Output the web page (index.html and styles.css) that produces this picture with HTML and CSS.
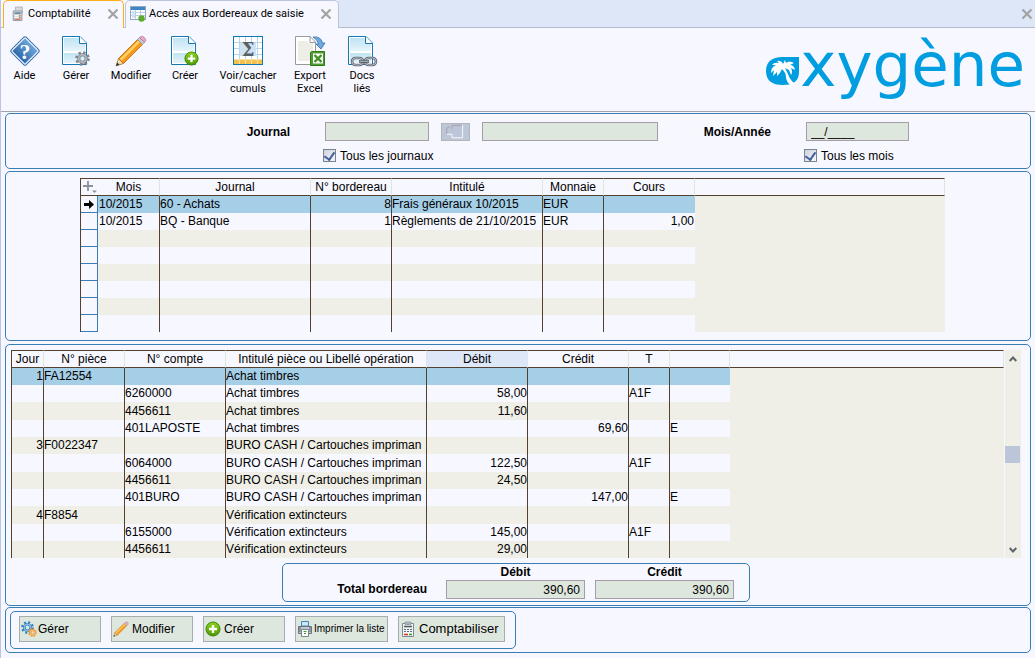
FILE: index.html
```html
<!DOCTYPE html>
<html lang="fr">
<head>
<meta charset="utf-8">
<title>Comptabilité</title>
<link rel="stylesheet" href="styles.css">
</head>
<body>
<svg class="defs" aria-hidden="true">
  <defs>
    <linearGradient id="gBlue" x1="0" y1="0" x2="0" y2="1"><stop offset="0" stop-color="#6fa6da"/><stop offset="1" stop-color="#2e68a8"/></linearGradient>
    <linearGradient id="gPage" x1="0" y1="0" x2="0" y2="1"><stop offset="0" stop-color="#bfe4f2"/><stop offset="1" stop-color="#e6f3fb"/></linearGradient>
    <linearGradient id="gGreen" x1="0" y1="0" x2="0" y2="1"><stop offset="0" stop-color="#8fd21c"/><stop offset="1" stop-color="#4c9a06"/></linearGradient>
    <symbol id="page" viewBox="0 0 32 32">
      <path d="M2.500 1.500H20L26.500 8V29.500H2.500Z" fill="#fff" stroke="#1478b4"/>
      <path d="M4 3H19V9H25V16H4Z" fill="url(#gPage)"/><path d="M4 18H25V28H4Z" fill="url(#gPage)"/>
      <path d="M19.500 1.500V8.500H26.500" fill="#fff" stroke="#1478b4"/>
    </symbol>
    <symbol id="plus" viewBox="0 0 16 16">
      <circle cx="8" cy="8" r="7" fill="url(#gGreen)" stroke="#3c8404"/>
      <path d="M8 4V12M4 8H12" stroke="#fff" stroke-width="2.400"/>
    </symbol>
    <symbol id="pencil" viewBox="0 0 32 32">
      <path d="M1 31L3.500 23.500L8.500 28.500Z" fill="#f6d9a8" stroke="#8a6a3a" stroke-width=".7"/><path d="M1 31L2.200 27.500L4.500 29.800Z" fill="#333"/>
      <path d="M3.500 23.500L22.500 4.500L27.500 9.500L8.500 28.500Z" fill="#f59a1b" stroke="#b8640c" stroke-width=".8"/>
      <path d="M4.800 24L23.300 5.500L25 7.200L6.500 25.700Z" fill="#ffcf6a"/>
      <path d="M22.500 4.500L24.500 2.500L29.500 7.500L27.500 9.500Z" fill="#c3cbd6" stroke="#7f8894" stroke-width=".6"/>
      <path d="M24.500 2.500Q26.500 .5 28.500 1.800L30.200 3.500Q31.500 5.500 29.500 7.500Z" fill="#f0a6c4" stroke="#a8668a" stroke-width=".6"/>
    </symbol>
    <symbol id="gear" viewBox="0 0 16 16">
      <circle cx="8" cy="8" r="6.300" fill="none" stroke="currentColor" stroke-width="3" stroke-dasharray="2.474 2.474"/>
      <circle cx="8" cy="8" r="4" fill="none" stroke="currentColor" stroke-width="3.200"/>
      <circle cx="8" cy="8" r="4" fill="none" stroke="#fff" stroke-opacity=".45" stroke-width="1.600"/>
    </symbol>
    <symbol id="cross" viewBox="0 0 12 12"><path d="M1.500 1.500L10.500 10.500M10.500 1.500L1.500 10.500" stroke="#a3a3a3" stroke-width="2.200"/></symbol>
  </defs>
</svg>

<header class="tabbar">
  <div class="tab tab-active">
    <svg class="tab-icon" viewBox="0 0 16 16"><path d="M5 0H13V7H5Z" fill="#d9d9dc" stroke="#b2b2b6"/><path d="M2.500 4.500H12.500V15.500H2.500Z" fill="#c9d2da" stroke="#8b98a4"/><path d="M4 6H11V8H4Z" fill="#6f8ea8"/><path d="M4 10H11M4 12H11" stroke="#fff" stroke-width="1.200"/><path d="M4 14H11M9 10H11M9 12H11" stroke="#e0622a" stroke-width="1.200"/></svg>
    <a class="tab-name" href="#compta">Comptabilité</a>
    <button class="close" aria-label="Fermer Comptabilité"><svg viewBox="0 0 12 12"><use href="#cross"/></svg></button>
  </div>
  <div class="tab">
    <svg class="tab-icon" viewBox="0 0 16 16"><rect x=".5" y=".5" width="15" height="13" fill="#fff" stroke="#8fa9c4"/><rect x="1" y="1" width="14" height="3" fill="#3f86c4"/><path d="M1 6.500H15M1 9.500H15M5.500 4V13M10.500 4V13" stroke="#b9cfe2"/><path d="M2 5H5V12H2Z" fill="#cfe3f3"/><circle cx="11.500" cy="12.500" r="3.200" fill="#5cab2c"/></svg>
    <a class="tab-name" href="#bordereaux">Accès aux Bordereaux de saisie</a>
    <button class="close" aria-label="Fermer Bordereaux"><svg viewBox="0 0 12 12"><use href="#cross"/></svg></button>
  </div>
  <button class="close close-all" aria-label="Fermer"><svg viewBox="0 0 12 12"><use href="#cross"/></svg></button>
</header>

<nav class="toolbar">
  <button class="tool w47"><svg viewBox="0 0 32 32"><rect x="5" y="5" width="22" height="22" rx="2" transform="rotate(45 16 16)" fill="#2d68a6"/><rect x="6.500" y="6.500" width="19" height="19" rx="1" transform="rotate(45 16 16)" fill="url(#gBlue)" stroke="#e4effa" stroke-width="1.200"/><text x="16" y="24" class="help-mark">?</text></svg>Aide</button>
  <button class="tool w56"><svg viewBox="0 0 32 32"><use href="#page"/><use class="c-grey" href="#gear" x="15" y="16" width="15" height="15"/></svg>Gérer</button>
  <button class="tool w54"><svg viewBox="0 0 32 32"><use href="#pencil"/></svg>Modifier</button>
  <button class="tool w54"><svg viewBox="0 0 32 32"><use href="#page"/><use href="#plus" x="15" y="16" width="15" height="15"/></svg>Créer</button>
  <button class="tool w72"><svg viewBox="0 0 32 32"><rect x="1.500" y="1.500" width="29" height="28" fill="#fff" stroke="#1478b4"/><path d="M7.500 2V25M13.500 2V25M19.500 2V25M25.500 2V25M2 7.500H30M2 13.500H30M2 19.500H30" stroke="#b5d5ea"/><path d="M8 8H24V21H8Z" fill="#cfe2f2"/><path d="M2 24.500H30V29H2Z" fill="#f5c04e"/><path d="M7.500 24V29M13.500 24V29M19.500 24V29M25.500 24V29" stroke="#fbe1a2"/><text x="16" y="21" class="sigma">Σ</text></svg>Voir/cacher<br>cumuls</button>
  <button class="tool w52"><svg viewBox="0 0 32 32"><path d="M1.500 1.500H16L21.500 7V29.500H1.500Z" fill="#fff" stroke="#9a9a9a"/><path d="M4 6H14V8H19V26H4Z" fill="#edefe7"/><path d="M16 1.500V7.500H21.500" fill="none" stroke="#9a9a9a"/><path d="M19 2Q27 1 28.500 8H31L27 14L22 9H24.500Q24 5 19 2Z" fill="#6fa9dc" stroke="#2f6fae" stroke-width=".8"/><path d="M17.500 16.500H30.500V30.500H16.500V17.500Z" fill="#4f9d2f" stroke="#2f7a18"/><rect x="19" y="18.500" width="10" height="10" fill="#fff"/><path d="M20.500 20L27.500 27M27.500 20L20.500 27" stroke="#3f8f22" stroke-width="2.400"/></svg>Export<br>Excel</button>
  <button class="tool w52"><svg viewBox="0 0 32 32"><use href="#page"/><g fill="none" stroke="#5d6670" stroke-width="2.600"><rect x="6" y="23" width="11" height="7" rx="3.500"/><rect x="19" y="23" width="11" height="7" rx="3.500"/></g><g fill="none" stroke="#c3c9cf" stroke-width=".9"><rect x="6" y="23" width="11" height="7" rx="3.500"/><rect x="19" y="23" width="11" height="7" rx="3.500"/></g><path d="M13 26.500H23" stroke="#4d565f" stroke-width="2.600"/><path d="M13.500 26.300H22.500" stroke="#c3c9cf" stroke-width=".9"/></svg>Docs<br>liés</button>
  <div class="logo">
    <svg viewBox="0 0 34 29" role="img" aria-label="Palmier"><path d="M15 0H33V15Q33 28 17 28Q0 28 0 14Q0 1 15 0Z" fill="#009ee0"/>
      <path d="M17 7Q15 3 11 4L13 6Q8 5 6 8L10 8Q5 10 5 16L8 13L7 19L11 15L11 19Q14 17 16 12Q20 16 20 20Q20 25 25 28L28 26Q24 23 22 17L19 11L23 13L25 18Q27 15 25 11L29 13Q28 8 24 8L28 6Q23 3 20 6L19 3Z" fill="#fff"/></svg>
    <span>xygène</span>
  </div>
</nav>

<main class="content">
  <form class="panel filters">
    <label class="name" for="journal">Journal</label>
    <input class="field" id="journal" type="text">
    <button class="lookup" type="button" aria-label="Choisir un journal"><svg viewBox="0 0 29 18"><path d="M10.500 2V5.500M10.500 1.500H22M8 3.500H6L4.500 6V11" fill="none" stroke="#a59aa6"/><path d="M22.500 1V15.500H10.500V11.500H5" fill="none" stroke="#fff"/></svg></button>
    <input class="field" id="journal-nom" type="text" aria-label="Nom du journal">
    <label class="name" for="mois">Mois/Année</label>
    <input class="field" id="mois" type="text" value="__/____">
    <div class="check check-journal"><input type="checkbox" id="tj" checked><label for="tj">Tous les journaux</label></div>
    <div class="check check-mois"><input type="checkbox" id="tm" checked><label for="tm">Tous les mois</label></div>
  </form>

  <section class="panel slips">
    <table class="grid">
      <colgroup><col class="c17"><col class="c62"><col class="c151"><col class="c81"><col class="c151"><col class="c61"><col class="c91"><col></colgroup>
      <thead><tr>
        <th class="open"><svg class="add" viewBox="0 0 15 14"><path d="M6 1V11M1 6H11" stroke="#8a9298" stroke-width="1.800"/><path d="M10 10.500H15L12.500 13Z" fill="#8a9298"/></svg></th>
        <th>Mois</th><th>Journal</th><th>N° bordereau</th><th>Intitulé</th><th>Monnaie</th><th>Cours</th><th></th></tr></thead>
      <tbody>
        <tr class="selected"><td class="handle"><svg viewBox="0 0 10 9"><path d="M0 3H5V0L10 4.500L5 9V6H0Z"/></svg></td><td>10/2015</td><td>60 - Achats</td><td class="num">8</td><td>Frais généraux 10/2015</td><td>EUR</td><td class="last"></td><td class="filler" rowspan="8"></td></tr>
        <tr><td class="handle"></td><td>10/2015</td><td>BQ - Banque</td><td class="num">1</td><td>Règlements de 21/10/2015</td><td>EUR</td><td class="num last">1,00</td></tr>
        <tr><td class="handle"></td><td></td><td></td><td></td><td></td><td></td><td class="last"></td></tr>
        <tr><td class="handle"></td><td></td><td></td><td></td><td></td><td></td><td class="last"></td></tr>
        <tr><td class="handle"></td><td></td><td></td><td></td><td></td><td></td><td class="last"></td></tr>
        <tr><td class="handle"></td><td></td><td></td><td></td><td></td><td></td><td class="last"></td></tr>
        <tr><td class="handle"></td><td></td><td></td><td></td><td></td><td></td><td class="last"></td></tr>
        <tr><td class="handle"></td><td></td><td></td><td></td><td></td><td></td><td class="last"></td></tr>
      </tbody>
    </table>
  </section>

  <section class="panel entries">
    <div class="scroller">
      <table class="grid lines">
        <colgroup><col class="c32"><col class="c81"><col class="c101"><col class="c201"><col class="c101"><col class="c101"><col class="c41"><col class="c60"><col></colgroup>
        <thead><tr><th>Jour</th><th>N° pièce</th><th>N° compte</th><th>Intitulé pièce ou Libellé opération</th><th class="sorted">Débit</th><th>Crédit</th><th>T</th><th></th><th></th></tr></thead>
        <tbody>
          <tr class="selected"><td class="num">1</td><td>FA12554</td><td></td><td>Achat timbres</td><td></td><td></td><td></td><td class="last"></td><td class="filler" rowspan="11"></td></tr>
          <tr><td></td><td></td><td>6260000</td><td>Achat timbres</td><td class="num">58,00</td><td></td><td>A1F</td><td class="last"></td></tr>
          <tr><td></td><td></td><td>4456611</td><td>Achat timbres</td><td class="num">11,60</td><td></td><td></td><td class="last"></td></tr>
          <tr><td></td><td></td><td>401LAPOSTE</td><td>Achat timbres</td><td></td><td class="num">69,60</td><td></td><td class="last">E</td></tr>
          <tr><td class="num">3</td><td>F0022347</td><td></td><td>BURO CASH / Cartouches impriman</td><td></td><td></td><td></td><td class="last"></td></tr>
          <tr><td></td><td></td><td>6064000</td><td>BURO CASH / Cartouches impriman</td><td class="num">122,50</td><td></td><td>A1F</td><td class="last"></td></tr>
          <tr><td></td><td></td><td>4456611</td><td>BURO CASH / Cartouches impriman</td><td class="num">24,50</td><td></td><td></td><td class="last"></td></tr>
          <tr><td></td><td></td><td>401BURO</td><td>BURO CASH / Cartouches impriman</td><td></td><td class="num">147,00</td><td></td><td class="last">E</td></tr>
          <tr><td class="num">4</td><td>F8854</td><td></td><td>Vérification extincteurs</td><td></td><td></td><td></td><td class="last"></td></tr>
          <tr><td></td><td></td><td>6155000</td><td>Vérification extincteurs</td><td class="num">145,00</td><td></td><td>A1F</td><td class="last"></td></tr>
          <tr><td></td><td></td><td>4456611</td><td>Vérification extincteurs</td><td class="num">29,00</td><td></td><td></td><td class="last"></td></tr>
        </tbody>
      </table>
      <div class="scrollbar">
        <button aria-label="Défiler vers le haut"><svg viewBox="0 0 8 6"><path d="M.7 5L4 1.500L7.300 5" fill="none" stroke="#5c6468" stroke-width="2"/></svg></button>
        <div class="thumb"></div>
        <button aria-label="Défiler vers le bas"><svg viewBox="0 0 8 6"><path d="M.7 1L4 4.500L7.300 1" fill="none" stroke="#5c6468" stroke-width="2"/></svg></button>
      </div>
    </div>
    <div class="totals">
      <span></span>
      <label class="total-head" for="td">Débit</label>
      <label class="total-head" for="tc">Crédit</label>
      <span class="total-name">Total bordereau</span>
      <input class="field amount" id="td" type="text" value="390,60">
      <input class="field amount" id="tc" type="text" value="390,60">
    </div>
  </section>

  <footer class="panel footer">
    <div class="actions">
      <button class="action w82 flush"><svg viewBox="0 0 16 16"><use class="c-blue" href="#gear" x="0" y="0" width="13" height="13"/><use class="c-orange" href="#gear" x="7" y="7" width="9" height="9"/></svg>Gérer</button>
      <button class="action w82"><svg viewBox="0 0 32 32"><use href="#pencil"/></svg>Modifier</button>
      <button class="action w82"><svg viewBox="0 0 16 16"><use href="#plus"/></svg>Créer</button>
      <button class="action w93 flush"><svg viewBox="0 0 16 16"><path d="M4.500 .5H11.500V5H4.500Z" fill="#cfe7f7" stroke="#3f86b8"/><path d="M1.500 5.500H14.500V12.500H1.500Z" fill="#c2c8ce" stroke="#6c757e"/><path d="M3 5V11M13 5V11" stroke="#59636c"/><path d="M4.500 8.500H11.500V15.500H4.500Z" fill="#fff" stroke="#7b858e"/><path d="M6.500 10.500H9.500M7 12.500H9" stroke="#3f9d20" stroke-width="1.200"/></svg><span class="small">Imprimer la liste</span></button>
      <button class="action w107 large"><svg viewBox="0 0 16 16"><path d="M2.500 2.500H13.500V15.500H2.500Z" fill="#f4f7f9" stroke="#7c8996"/><path d="M5 1H11V3.500H5Z" fill="#a9b4be" stroke="#7c8996" stroke-width=".6"/><path d="M4 5.500H12" stroke="#4d5f50" stroke-width="1.600"/><path d="M4 8.500H6M7 8.500H9M10 8.500H12M4 10.500H6M7 10.500H9M10 10.500H12" stroke="#5d6d78"/><path d="M4 13.500H8" stroke="#d8362c" stroke-width="1.600"/><path d="M9 13.500H12" stroke="#3f9d20" stroke-width="1.600"/></svg>Comptabiliser</button>
    </div>
  </footer>
</main>
</body>
</html>
```
FILE: styles.css
```css
* { box-sizing: border-box; }
body {
  margin: 0;
  min-height: 100vh;
  background: #f7f7ff;
  border-left: 1px solid #bdc5de;
  color: #000;
  font: 12px/16px "Liberation Sans", Arial, sans-serif;
}
button, input { font: inherit; color: inherit; margin: 0; }
button { padding: 0; border: 0; background: none; }
svg { display: block; flex: none; }
.defs { position: absolute; width: 0; height: 0; }
.c-grey { color: #7c858d; }
.c-blue { color: #2f7fc4; }
.c-orange { color: #ec9526; }

/* Tabs */
.tabbar {
  display: flex;
  height: 28px;
  padding-left: 2px;
  gap: 1px;
  background: linear-gradient(#dee7f7, #dee7f7) 337px 0 no-repeat #f7f7ff;
  border-bottom: 1px solid #b5bdd6;
}
.tab {
  display: flex;
  align-items: center;
  height: 28px;
  width: 214px;
  padding: 0 6px 2px 4px;
  background: #f7f7ff;
  border: 1px solid #bdc5de;
  border-bottom: 0;
  border-radius: 5px 5px 0 0;
}
.tab-active { width: 121px; padding-left: 7px; padding-right: 4px; border-color: #ffad18; }
.tab-icon { width: 16px; height: 16px; margin-right: 3px; }
.tab-active .tab-icon { width: 14px; }
.tab-name { flex: 1; color: #000; text-decoration: none; white-space: nowrap; font: 11px/16px Roboto, sans-serif; }
.close svg { width: 12px; height: 12px; }
.close-all { align-self: center; margin-left: auto; padding-right: 2px; }

/* Toolbar */
.toolbar {
  display: flex;
  align-items: flex-start;
  height: 84px;
  padding-top: 7px;
  border-bottom: 1px solid #a5a0ab;
}
.tool { flex: none; font: 11px/13px Roboto, sans-serif; text-align: center; }
.tool svg { width: 32px; height: 32px; margin: 0 auto 2px; }
.w47 { width: 47px; }
.w52 { width: 52px; }
.w54 { width: 54px; }
.w56 { width: 56px; }
.w72 { width: 72px; }
.help-mark { font: bold 22px "Liberation Serif", serif; fill: #fff; text-anchor: middle; }
.sigma { font: bold 18px "DejaVu Serif", serif; fill: #5a5f63; text-anchor: middle; }
.logo {
  display: flex;
  align-items: baseline;
  margin-left: auto;
  padding-right: 10px;
  color: #009ee0;
  font: 61px/60px "DejaVu Sans", sans-serif;
}
.logo svg { width: 34px; height: 29px; }

/* Panels */
.content { display: flex; flex-direction: column; padding: 1px 4px 5px; }
.panel { border: 1px solid #397db5; border-radius: 5px; }
.field {
  width: 100%;
  height: 19px;
  padding: 0 4px;
  border: 1px solid #a59ca5;
  background: #dee7de;
}

.filters {
  display: grid;
  grid-template-columns: 307px 104px 29px minmax(100px, 1fr) 124px 103px;
  column-gap: 12px;
  row-gap: 6px;
  align-items: center;
  padding: 8px 121px 4px 0;
}
.name { padding-right: 23px; text-align: right; font-weight: bold; }
.lookup { height: 18px; border: 1px solid #b5b5b8; background: #bdc6d8; }
.lookup svg { width: 27px; height: 16px; }
.check { display: flex; align-items: center; gap: 4px; margin-left: -2px; height: 17px; }
.check-journal { grid-column: 2 / 5; }
.check-mois { grid-column: 6; white-space: nowrap; }
.check input {
  appearance: none;
  width: 13px;
  height: 13px;
  border: 1px solid #7b8494;
  background: linear-gradient(135deg, #cfd3dc, #f4f5f8);
  display: grid;
  place-items: center;
}
.check input:checked::after {
  content: "";
  width: 5px;
  height: 8px;
  margin-bottom: 2px;
  border: solid #405f98;
  border-width: 0 2px 2px 0;
  transform: rotate(35deg);
}

/* Data grids */
.grid {
  width: 100%;
  table-layout: fixed;
  border-spacing: 0;
  border-left: 1px solid #52412e;
}
.grid th {
  height: 18px;
  padding: 0;
  border-top: 1px solid #52412e;
  border-bottom: 1px solid #52412e;
  border-right: 1px solid #dee7de;
  font-weight: normal;
  line-height: 16px;
  white-space: nowrap;
}
.grid th.open { border-right: 0; }
.grid th.sorted { background: #dee7f7; border-right-color: #dee7f7; }
.grid td {
  height: 17px;
  padding: 0;
  line-height: 17px;
  overflow: hidden;
  white-space: nowrap;
  border-right: 1px solid #52412e;
}
.grid tbody tr:nth-child(odd) td, .grid td.filler { background: #efefe7; }
.grid tbody tr.selected td:not(.filler) { background: #a5cee7; }
.grid .num { text-align: right; }
.grid td.last, .grid td.filler { border-right: 0; }
.grid .num.last { padding-right: 1px; }
.grid tbody tr td.handle, .grid tbody tr.selected td.handle {
  background: #f7f7ff;
  border-right: 1px solid #397db5;
  border-bottom: 1px solid #397db5;
}
.handle svg { width: 10px; height: 9px; margin: 0 auto; }
.grid .handle + td { padding-left: 1px; }
.add { width: 15px; height: 14px; margin-left: 1px; }
.lines tbody tr:nth-child(3n) td { height: 18px; line-height: 18px; }
.c17 { width: 17px; }
.c32 { width: 32px; }
.c41 { width: 41px; }
.c60 { width: 60px; }
.c61 { width: 61px; }
.c62 { width: 62px; }
.c81 { width: 81px; }
.c91 { width: 91px; }
.c101 { width: 101px; }
.c151 { width: 151px; }
.c201 { width: 201px; }

.slips { margin-top: 2px; padding: 6px 85px 8px 74px; }
.entries { margin-top: 3px; padding: 5px 9px 3px 5px; }
.scroller { display: flex; gap: 1px; }
.scroller .grid { flex: 1; min-width: 0; }
.scrollbar {
  display: flex;
  flex: none;
  flex-direction: column;
  justify-content: space-between;
  width: 16px;
  background: #efefe7;
}
.scrollbar button { display: grid; place-items: center; height: 17px; }
.scrollbar svg { width: 8px; height: 6px; }
.thumb { width: 15px; height: 17px; background: #bdc6d8; }

.totals {
  display: grid;
  grid-template-columns: 153px 139px 139px;
  column-gap: 10px;
  width: 468px;
  margin: 5px auto 0;
  padding: 0 0 2px;
  border: 1px solid #397db5;
  border-radius: 5px;
}
.total-name { padding-right: 9px; text-align: right; font-weight: bold; line-height: 19px; }
.total-head { text-align: center; font-weight: bold; }
.amount { text-align: right; }

/* Footer actions */
.footer { display: flex; margin-top: 1px; padding: 3px 4px; }
.actions { display: flex; gap: 10px; padding: 4px 10px 6px 8px; border: 1px solid #397db5; border-radius: 5px; }
.action {
  display: flex;
  align-items: center;
  gap: 3px;
  height: 26px;
  padding-left: 1px;
  border: 1px solid #a5adad;
  background: #dee7de;
  white-space: nowrap;
}
.action svg { width: 16px; height: 16px; }
.flush { gap: 1px; }
.w82 { width: 82px; }
.w93 { width: 93px; }
.w107 { width: 107px; }
.small { font-size: 10px; }
.large { font-size: 13px; }
```
